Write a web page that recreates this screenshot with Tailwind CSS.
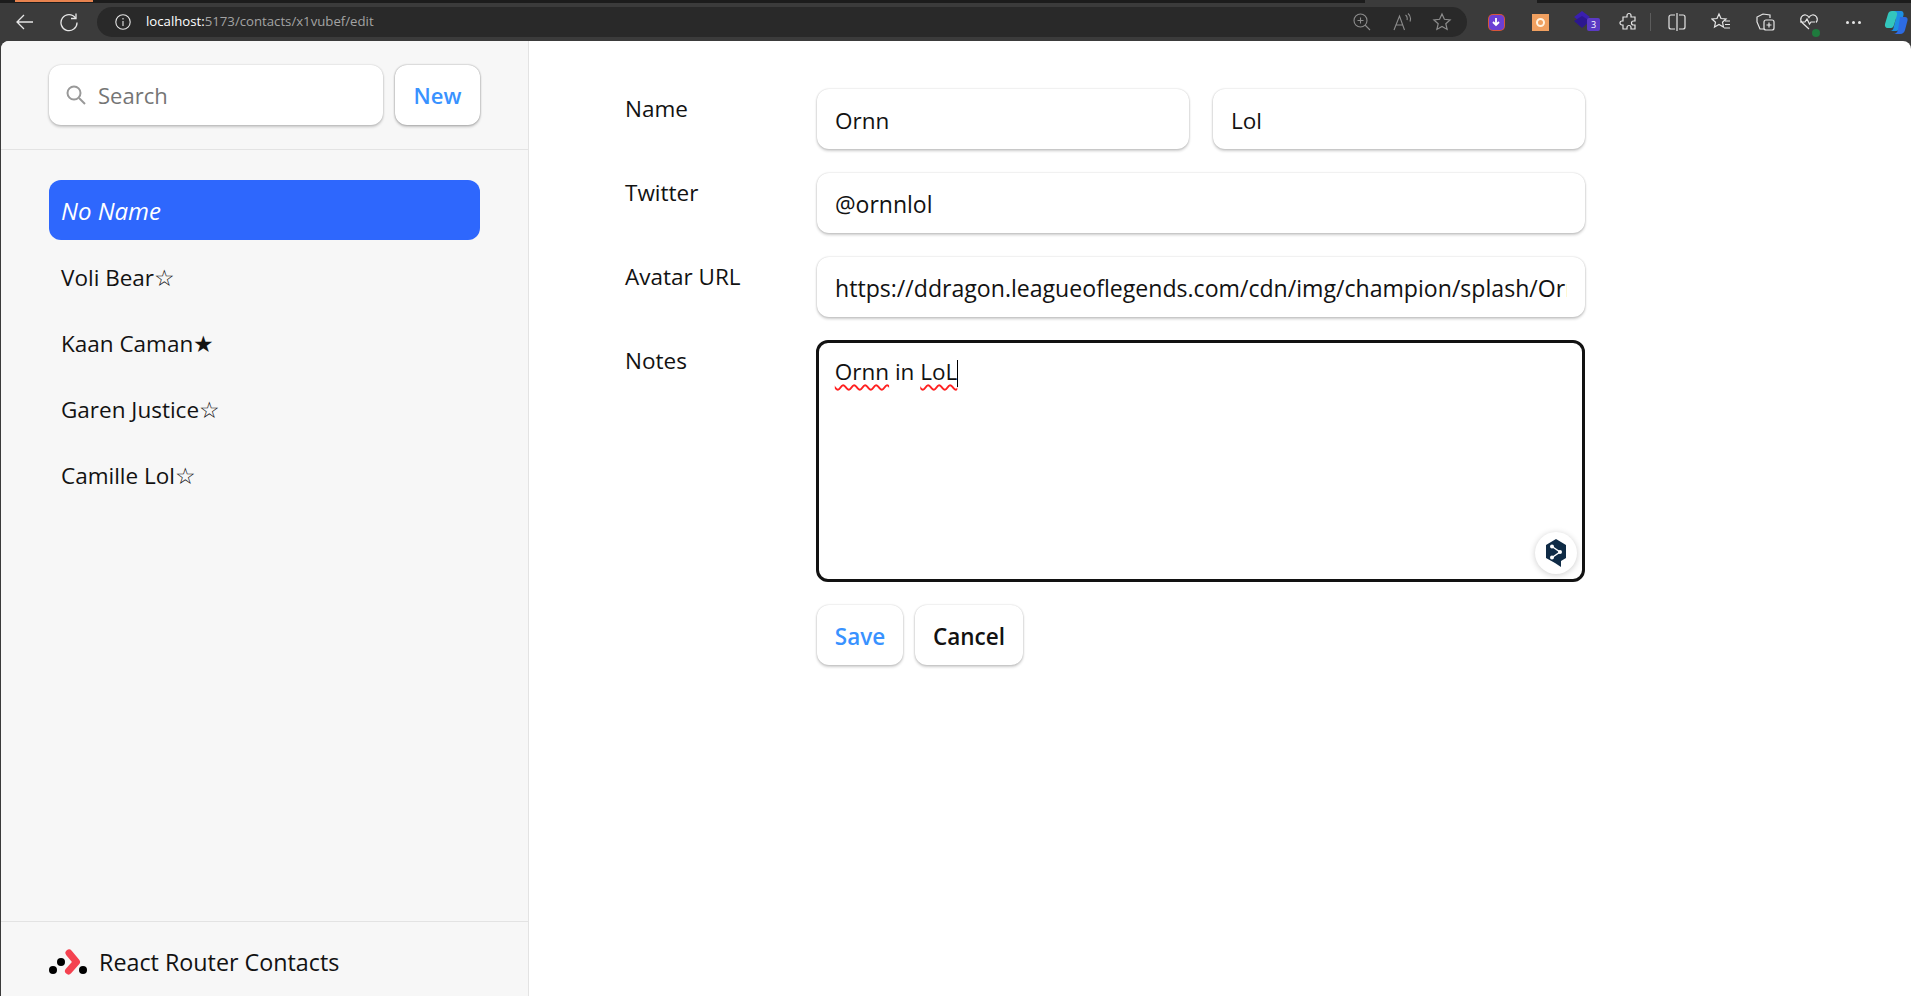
<!DOCTYPE html>
<html lang="en">
<head>
    <meta charset="utf-8">
    <title>React Router Contacts</title>
    <script src="https://cdn.jsdelivr.net/npm/@tailwindcss/browser@4"></script>
</head>
<body class="w-screen h-screen overflow-hidden bg-[#3b3b3b] flex flex-col font-['Open_Sans',sans-serif] text-[#121212]">
    <!-- tab strip -->
    <div class="h-[3px] bg-[#1c1c1c] flex shrink-0">
        <div class="ml-[15px] w-[78px] h-[2px] bg-[#e8834f]"></div>
        <div class="ml-[1272px] w-[172px] h-[3px] bg-[#3b3b3b]"></div>
    </div>
    <!-- browser toolbar -->
    <div class="h-[38px] shrink-0 flex items-center text-[#e6e6e6]">
        <div class="w-[49px] flex justify-center">
            <svg width="20" height="20" viewBox="0 0 20 20" fill="none" stroke="currentColor" stroke-width="1.3"><path d="M18 10H2M9 3l-7 7 7 7"/></svg>
        </div>
        <div class="w-[42px] flex justify-center -translate-x-[1px]">
            <svg width="20" height="20" viewBox="0 0 20 20" fill="none" stroke="currentColor" stroke-width="1.3"><path d="M16.5 6A8 8 0 1 0 18 10.500"/><path d="M17 1.500V6.500H12"/></svg>
        </div>
        <div class="ml-[6px] w-[1370px] h-[30px] rounded-full bg-[#292929] flex items-center pl-[18px] pr-[14px]">
            <svg width="16" height="16" viewBox="0 0 16 16" fill="none" stroke="currentColor" stroke-width="1.100"><circle cx="8" cy="8" r="7.200"/><path d="M8 7v5M8 4v1.500"/></svg>
            <div class="ml-[15px] text-[13.200px] whitespace-nowrap"><span class="text-white">localhost:</span><span class="text-[#a3a3a3]">5173/contacts/x1vubef/edit</span></div>
            <div class="ml-auto flex items-center gap-[20px] text-[#8c8c8c]">
                <svg width="20" height="20" viewBox="0 0 20 20" fill="none" stroke="currentColor" stroke-width="1.100"><circle cx="8.500" cy="8.500" r="6.500"/><path d="M13 13l5 5M8.500 5.500v6M5.500 8.500h6"/></svg>
                <svg width="20" height="20" viewBox="0 0 20 20" fill="none" stroke="currentColor" stroke-width="1.100"><path d="M2 18L7.500 4l5 14M4 13h7M13.500 3c1.500 1 2 3 1.500 5M16 1.500c2.500 2 3 5 2 8"/></svg>
                <svg class="mr-[1px]" width="20" height="20" viewBox="0 0 20 20" fill="none" stroke="currentColor" stroke-width="1.200"><path d="M10 2l2.400 5.300 5.700.6-4.300 3.800 1.300 5.700L10 14.400l-5.100 3 1.300-5.700L1.900 7.900l5.700-.6z"/></svg>
            </div>
        </div>
        <div class="ml-[7px] w-[44px] flex justify-center">
            <div class="w-[15px] h-[15px] rounded-[4px] bg-[#6b3fd4] ring-1 ring-[#d8553a] flex items-center justify-center">
                <svg width="10" height="10" viewBox="0 0 10 10" fill="none" stroke="#fff" stroke-width="1.800"><path d="M5 1v7M2 5l3 3 3-3"/></svg>
            </div>
        </div>
        <div class="w-[44px] flex justify-center">
            <div class="w-[17px] h-[17px] bg-[#f0a060] flex items-center justify-center">
                <div class="w-[9px] h-[9px] rounded-full border-2 border-[#fff3e0]"></div>
            </div>
        </div>
        <div class="w-[44px] flex justify-center relative">
            <svg width="20" height="22" viewBox="0 0 20 22" class="-translate-x-[2px] -translate-y-[1px]"><path d="M10 1l8 6-8 6-8-6z" fill="#3a1fb0"/><path d="M2 11l8-5 8 5-8 7z" fill="#2c1790"/></svg>
            <span class="absolute left-[25px] top-[7px] w-[13px] h-[13px] rounded-[2px] bg-[#5b3ac4] text-white text-[9px] leading-[13px] text-center">3</span>
        </div>
        <div class="w-[44px] flex justify-center translate-x-[1px]">
            <svg width="20" height="20" viewBox="0 0 20 20" fill="none" stroke="currentColor" stroke-width="1.200"><path d="M8 3.500a2 2 0 0 1 4 0V5h4v4h-1.500a2 2 0 0 0 0 4H16v4h-4v-1.500a2 2 0 0 0-4 0V17H4v-4H3a2 2 0 0 1 0-4h1V5h4z"/></svg>
        </div>
        <div class="w-px h-[18px] bg-[#5c5c5c] mr-[4px]"></div>
        <div class="w-[44px] flex justify-center">
            <svg width="20" height="20" viewBox="0 0 20 20" fill="none" stroke="currentColor" stroke-width="1.200"><path d="M8 3H4a2 2 0 0 0-2 2v10a2 2 0 0 0 2 2h4M12 3h4a2 2 0 0 1 2 2v10a2 2 0 0 1-2 2h-4M10 1v18"/></svg>
        </div>
        <div class="w-[44px] flex justify-center">
            <svg width="20" height="20" viewBox="0 0 20 20" fill="none" stroke="currentColor" stroke-width="1.200"><path d="M8 2l2 4.500 5 .5-3.500 3.300 1 4.700L8 12.500 3.500 15l1-4.700L1 7l5-.5zM14 9h5M14 12.500h5M13 16h6"/></svg>
        </div>
        <div class="w-[44px] flex justify-center">
            <svg width="20" height="20" viewBox="0 0 20 20" fill="none" stroke="currentColor" stroke-width="1.200"><path d="M9 17H5l-3-7V5l6-3 7 1v3"/><rect x="9" y="8" width="10" height="10" rx="2"/><path d="M14 10.500v5M11.500 13h5"/></svg>
        </div>
        <div class="w-[44px] flex justify-center relative">
            <svg width="20" height="20" viewBox="0 0 20 20" fill="none" stroke="currentColor" stroke-width="1.200"><path d="M10 17L3 10.500C0 7 3 2 7 3c1.500.3 2.500 1.500 3 2.500C10.500 4.500 11.500 3.300 13 3c4-1 7 4 4 7.500M1 10h5l2-3 2.500 5 1.500-2h4"/></svg>
            <span class="absolute left-[25px] top-[17px] w-[8px] h-[8px] rounded-full bg-[#1f7a3d]"></span>
        </div>
        <div class="w-[44px] flex justify-center gap-[3px]">
            <span class="w-[3px] h-[3px] rounded-full bg-[#e6e6e6]"></span>
            <span class="w-[3px] h-[3px] rounded-full bg-[#e6e6e6]"></span>
            <span class="w-[3px] h-[3px] rounded-full bg-[#e6e6e6]"></span>
        </div>
        <svg class="ml-[9px] shrink-0" width="24" height="25" viewBox="0 0 24 25">
            <path d="M8 1h9c2 0 3 2 2.500 4L16 18c-.5 2-2 3-4 3H6c2 0 3-1 3.500-3L12 8C12.500 5 10 5 8 5z" fill="#1d8fe3"/>
            <path d="M8 1c-2 0-3.500 1-4 3L1 14c-.5 2 .5 4 2.500 4H7c1.500 0 2.500-1 3-3l3-10c.5-2 0-4-5-4z" fill="#33c6bd"/>
            <path d="M16 7h5c2 0 3 1.500 2.500 3.500L21 20c-.5 2-2 4-5 4H9c3 0 4.500-2 5-4z" fill="#2d6be3"/>
        </svg>
    </div>
    <!-- page -->
    <div class="flex-1 min-h-0 ml-px rounded-t-[8px] overflow-hidden flex bg-white">
        <aside class="w-[528px] shrink-0 bg-[#f7f7f7] border-r border-[#e3e3e3] flex flex-col">
            <div class="flex gap-[12px] px-[48px] py-[24px] border-b border-[#e3e3e3]">
                <div class="relative flex-1">
                    <svg class="absolute left-[17px] top-[20px]" width="20" height="20" viewBox="0 0 20 20" fill="none" stroke="#999" stroke-width="2"><circle cx="8" cy="8" r="6.500"/><path d="M13 13l6 6"/></svg>
                    <input type="search" placeholder="Search" class="w-full h-[60px] rounded-[12px] bg-white pl-[49px] text-[22px] outline-none placeholder:text-[#757575] shadow-[0_0_2px_rgba(0,0,0,0.2),0_2px_3px_rgba(0,0,0,0.2)]">
                </div>
                <button class="w-[85px] h-[60px] rounded-[12px] bg-white text-[#3992ff] text-[22px] font-semibold shadow-[0_0_2px_rgba(0,0,0,0.4),0_2px_3px_rgba(0,0,0,0.2)]">New</button>
            </div>
            <nav class="flex-1 px-[48px] pt-[30px]">
                <ul class="flex flex-col gap-[6px] text-[22.500px]">
                    <li class="h-[60px] rounded-[12px] bg-[#2e67fd] text-white italic text-[24px] flex items-center px-[12px] pt-[2px]">No Name</li>
                    <li class="h-[60px] flex items-center px-[12px] pt-[3px]">Voli Bear☆</li>
                    <li class="h-[60px] flex items-center px-[12px] pt-[3px]">Kaan Caman★</li>
                    <li class="h-[60px] flex items-center px-[12px] pt-[3px]">Garen Justice☆</li>
                    <li class="h-[60px] flex items-center px-[12px] pt-[3px]">Camille Lol☆</li>
                </ul>
            </nav>
            <div class="h-[75px] border-t border-[#e3e3e3] px-[48px] flex items-center gap-[11px] pt-[6px]">
                <svg width="40" height="28" viewBox="0 0 40 28" class="shrink-0 -ml-px">
                    <circle cx="5" cy="22" r="4" fill="#000"/>
                    <circle cx="13" cy="14" r="4" fill="#000"/>
                    <circle cx="35" cy="22" r="4" fill="#000"/>
                    <path d="M21 5l7.500 9-8 9" fill="none" stroke="#f44250" stroke-width="7" stroke-linecap="round" stroke-linejoin="round"/>
                </svg>
                <span class="text-[23.300px] font-medium">React Router Contacts</span>
            </div>
        </aside>
        <main class="flex-1 pl-[96px] pt-[48px]">
            <form class="w-[960px] flex flex-col gap-[24px] text-[22.500px]">
                <div class="flex">
                    <label class="w-[192px] leading-[36px] pt-[2px]">Name</label>
                    <div class="flex-1 flex gap-[24px]">
                        <input value="Ornn" class="w-[372px] h-[60px] rounded-[12px] bg-white px-[18px] pt-[2px] outline-none shadow-[0_0_2px_rgba(0,0,0,0.2),0_2px_3px_rgba(0,0,0,0.2)]">
                        <input value="Lol" class="w-[372px] h-[60px] rounded-[12px] bg-white px-[18px] pt-[2px] outline-none shadow-[0_0_2px_rgba(0,0,0,0.2),0_2px_3px_rgba(0,0,0,0.2)]">
                    </div>
                </div>
                <div class="flex">
                    <label class="w-[192px] leading-[36px] pt-[2px]">Twitter</label>
                    <input value="@ornnlol" class="w-[768px] h-[60px] rounded-[12px] bg-white px-[18px] pt-[2px] text-[23px] outline-none shadow-[0_0_2px_rgba(0,0,0,0.2),0_2px_3px_rgba(0,0,0,0.2)]">
                </div>
                <div class="flex">
                    <label class="w-[192px] leading-[36px] pt-[2px]">Avatar URL</label>
                    <input value="https://ddragon.leagueoflegends.com/cdn/img/champion/splash/Ornn_0.jpg" class="w-[768px] h-[60px] rounded-[12px] bg-white px-[18px] pt-[2px] text-[23.100px] outline-none shadow-[0_0_2px_rgba(0,0,0,0.2),0_2px_3px_rgba(0,0,0,0.2)]">
                </div>
                <div class="flex">
                    <label class="w-[192px] leading-[36px] pt-[2px]">Notes</label>
                    <div class="relative -ml-px -mt-px -mb-px w-[770px] h-[242px] rounded-[12px] border-[3px] border-[#121212] bg-white px-[16px] pt-[11px] leading-[36px]">
                        <span class="underline decoration-wavy decoration-[#ff2020] decoration-[1.500px] underline-offset-[4px]">Ornn</span> in <span class="underline decoration-wavy decoration-[#ff2020] decoration-[1.500px] underline-offset-[4px]">LoL</span><span class="inline-block w-px h-[27px] bg-black align-middle"></span>
                        <div class="absolute right-[5px] bottom-[5px] w-[42px] h-[42px] rounded-full bg-white shadow-[0_1px_6px_rgba(0,0,0,0.2)] flex items-center justify-center">
                            <svg width="24" height="30" viewBox="0 0 24 30"><path d="M12 1l10 6v13l-5 3v6l-6-4-9-5V7z" fill="#0f2b46"/><path d="M8 8.500l8 5.500-8 5.500" fill="none" stroke="#fff" stroke-width="1.500"/><circle cx="8" cy="8.500" r="2" fill="#fff"/><circle cx="16" cy="14" r="2" fill="#fff"/><circle cx="8" cy="19.500" r="2" fill="#fff"/></svg>
                        </div>
                    </div>
                </div>
                <div class="flex pl-[192px] gap-[12px]">
                    <button type="button" class="w-[86px] h-[60px] pt-[3px] rounded-[12px] bg-white text-[#3992ff] font-semibold shadow-[0_0_2px_rgba(0,0,0,0.2),0_2px_3px_rgba(0,0,0,0.2)]">Save</button>
                    <button type="button" class="w-[108px] h-[60px] pt-[3px] rounded-[12px] bg-white font-semibold shadow-[0_0_2px_rgba(0,0,0,0.2),0_2px_3px_rgba(0,0,0,0.2)]">Cancel</button>
                </div>
            </form>
        </main>
    </div>
</body>
</html>
